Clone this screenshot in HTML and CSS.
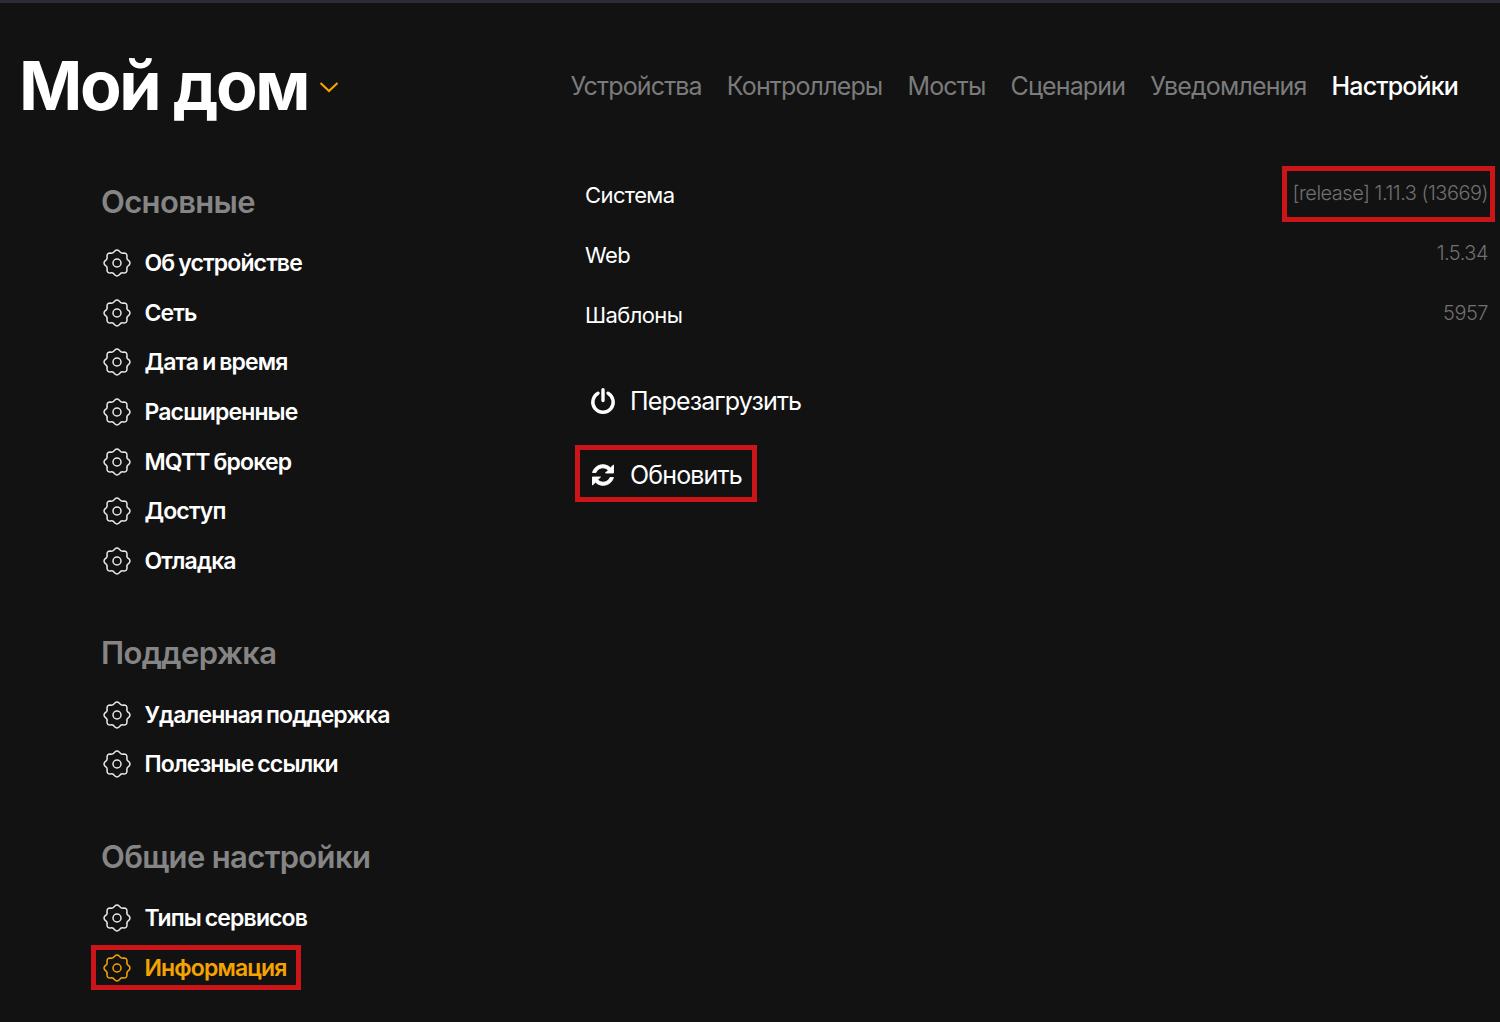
FILE: index.html
```html
<!DOCTYPE html>
<html lang="ru">
<head>
<meta charset="utf-8">
<title>Мой дом</title>
<link rel="stylesheet" href="styles.css">
</head>
<body>
<svg class="defs" width="0" height="0" aria-hidden="true">
  <symbol id="gear" viewBox="0 0 28 28">
    <path fill="none" stroke="currentColor" stroke-width="1.5" d="M25.77 11.66Q28.2 14 25.77 16.34Q23.24 17.83 23.98 20.67Q24.04 24.04 20.67 23.98Q17.83 23.24 16.34 25.77Q14 28.2 11.66 25.77Q10.17 23.24 7.33 23.98Q3.96 24.04 4.02 20.67Q4.76 17.83 2.23 16.34Q-.2 14 2.23 11.66Q4.76 10.17 4.02 7.33Q3.96 3.96 7.33 4.02Q10.17 4.76 11.66 2.23Q14 -.2 16.34 2.23Q17.83 4.76 20.67 4.02Q24.04 3.96 23.98 7.33Q23.24 10.17 25.77 11.66Z"/>
    <circle cx="14" cy="14" r="4" fill="none" stroke="currentColor" stroke-width="1.5"/>
  </symbol>
</svg>
<div class="topbar"></div>
<header class="header">
  <div class="brand">
    <h1 class="title">Мой дом</h1>
    <svg class="chevron" viewBox="0 0 20 12" width="20" height="12"><path d="M1.5 2L10 10L18.5 2" fill="none" stroke="currentColor" stroke-width="2.2"/></svg>
  </div>
  <nav class="nav">
    <a class="nav-link">Устройства</a>
    <a class="nav-link">Контроллеры</a>
    <a class="nav-link">Мосты</a>
    <a class="nav-link">Сценарии</a>
    <a class="nav-link">Уведомления</a>
    <a class="nav-link nav-active">Настройки</a>
  </nav>
</header>
<div class="layout">
  <aside class="sidebar">
    <section class="group">
      <h2 class="group-title">Основные</h2>
      <a class="item"><svg class="gear"><use href="#gear"/></svg>Об устройстве</a>
      <a class="item"><svg class="gear"><use href="#gear"/></svg>Сеть</a>
      <a class="item"><svg class="gear"><use href="#gear"/></svg>Дата и время</a>
      <a class="item"><svg class="gear"><use href="#gear"/></svg>Расширенные</a>
      <a class="item"><svg class="gear"><use href="#gear"/></svg>MQTT брокер</a>
      <a class="item"><svg class="gear"><use href="#gear"/></svg>Доступ</a>
      <a class="item"><svg class="gear"><use href="#gear"/></svg>Отладка</a>
    </section>
    <section class="group">
      <h2 class="group-title">Поддержка</h2>
      <a class="item"><svg class="gear"><use href="#gear"/></svg>Удаленная поддержка</a>
      <a class="item"><svg class="gear"><use href="#gear"/></svg>Полезные ссылки</a>
    </section>
    <section class="group">
      <h2 class="group-title">Общие настройки</h2>
      <a class="item"><svg class="gear"><use href="#gear"/></svg>Типы сервисов</a>
      <a class="item item-active mark mark-item"><svg class="gear"><use href="#gear"/></svg>Информация</a>
    </section>
  </aside>
  <main class="content">
    <div class="row"><span class="row-label">Система</span><span class="row-value mark mark-value">[release] 1.11.3 (13669)</span></div>
    <div class="row"><span class="row-label">Web</span><span class="row-value">1.5.34</span></div>
    <div class="row"><span class="row-label">Шаблоны</span><span class="row-value">5957</span></div>
    <div class="actions">
      <a class="action">
        <svg class="action-icon" viewBox="0 0 26 26"><path d="M8 5.2A10.2 10.2 0 1 0 18 5.2M13 1.8V12.5" fill="none" stroke="currentColor" stroke-width="3.4" stroke-linecap="round"/></svg>
        Перезагрузить
      </a>
      <a class="action mark mark-action">
        <svg class="action-icon" viewBox="0 0 26 26"><path d="M2.5 10.5A10.8 10.8 0 0 1 20.5 5.8L23.5 3V11H15.5L18.3 8.2A7.4 7.4 0 0 0 6 10.5ZM23.5 15.5A10.8 10.8 0 0 1 5.5 20.2L2.5 23V15H10.5L7.7 17.8A7.4 7.4 0 0 0 20 15.5Z" fill="currentColor" stroke="currentColor" stroke-width=".9"/></svg>
        Обновить
      </a>
    </div>
  </main>
</div>
</body>
</html>
```
FILE: styles.css
```css
* { box-sizing: border-box; }
html, body { margin: 0; height: 100%; }
body {
  background: #121212;
  color: #fff;
  font-family: Inter, "Liberation Sans", sans-serif;
  overflow: hidden;
}
.defs { position: absolute; }
.topbar { height: 3px; background: #2b2b35; }
.header {
  display: flex;
  justify-content: space-between;
  align-items: center;
  height: 162px;
  padding: 4px 42px 0 19px;
}
.brand { display: flex; align-items: center; gap: 11px; }
.title {
  margin: -2px 0 0;
  font-size: 68px;
  font-weight: 700;
  letter-spacing: -2.4px;
  line-height: 72px;
}
.chevron { color: #f5a300; margin-top: 1px; }
.nav { display: flex; gap: 25px; }
.nav-link { font-size: 25px; letter-spacing: -0.85px; color: #7b7b7b; line-height: 32px; }
.nav-active { color: #fff; font-weight: 500; }
.layout { display: flex; }
.sidebar { width: 585px; padding: 13px 0 0 102px; flex: none; }
.group { margin-bottom: 44px; }
.group-title {
  margin: 0 0 14px -1px;
  height: 46px;
  display: flex;
  align-items: center;
  font-size: 31px;
  font-weight: 600;
  letter-spacing: -0.65px;
  color: #858585;
}
.item {
  display: flex;
  align-items: center;
  gap: 13.5px;
  height: 49.7px;
  font-size: 23px;
  font-weight: 600;
  letter-spacing: -0.87px;
  word-spacing: -1px;
  color: #fff;
}
.gear { width: 28px; height: 28px; margin-left: 1px; color: #e8e8e8; flex: none; }
.item-active, .item-active .gear { color: #f5a300; }
.item-active { width: fit-content; }
.content { flex: 1; padding: 0 12px 0 0; }
.row {
  display: flex;
  justify-content: space-between;
  align-items: center;
  height: 59.85px;
}
.row-label { font-size: 22px; letter-spacing: -0.6px; color: #fff; }
.row-value { font-size: 20px; font-weight: 300; letter-spacing: -0.5px; color: #707070; margin-top: -4px; }
.actions { display: flex; flex-direction: column; gap: 20px; margin-top: 29.5px; }
.action {
  display: flex;
  align-items: center;
  gap: 14px;
  height: 54px;
  font-size: 25px;
  letter-spacing: -0.85px;
  color: #fff;
  align-self: flex-start;
  padding-left: 5px;
}
.action-icon { width: 26px; height: 26px; flex: none; }
.mark { position: relative; }
.mark::after {
  content: "";
  position: absolute;
  border: 5px solid #cb1519;
  pointer-events: none;
}
.mark-value::after { inset: -15px -7px -17px -10px; }
.mark-action::after { inset: -3px -15px 0 -10px; }
.mark-item::after { inset: 2px -15px 3px -11px; }
```
